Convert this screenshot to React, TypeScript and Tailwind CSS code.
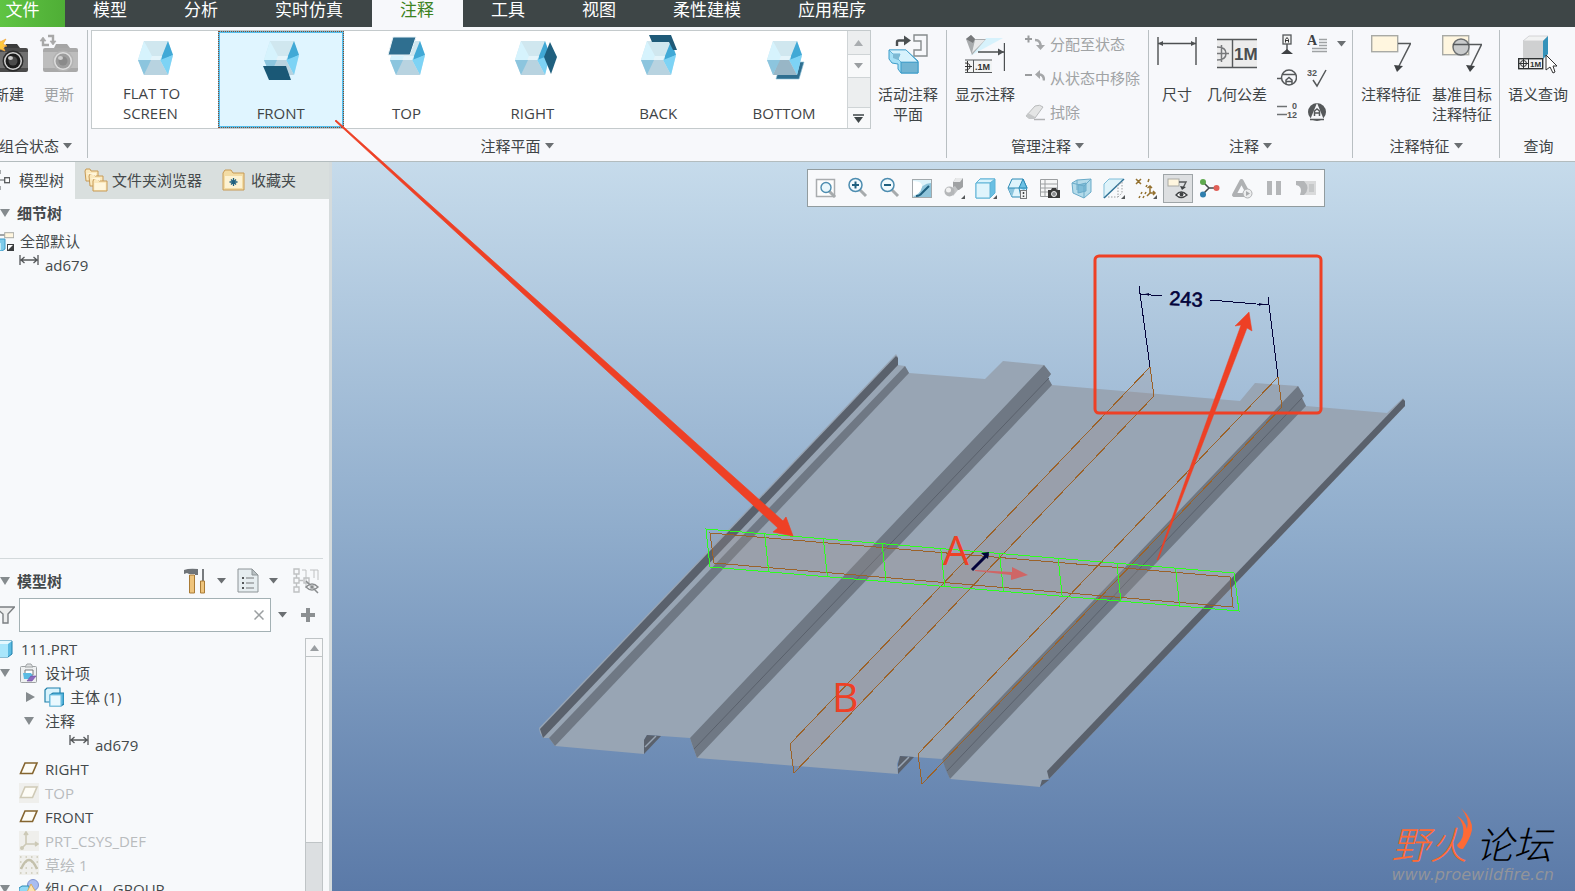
import { useState } from 'react'
import type { ReactNode } from 'react'

const tabs = ['模型', '分析', '实时仿真', '注释', '工具', '视图', '柔性建模', '应用程序']

function Tri({ color = '#6b6f72' }: { color?: string }) {
  return (
    <svg width="9" height="6" viewBox="0 0 9 6" className="shrink-0">
      <path d="M0 0h9L4.500 5.500z" fill={color} />
    </svg>
  )
}

function Expander({ open = true }: { open?: boolean }) {
  return (
    <svg width="10" height="10" viewBox="0 0 10 10" className="shrink-0">
      <path d={open ? 'M0 1h10L5 9z' : 'M1 0l9 5-9 5z'} fill="#858b8e" />
    </svg>
  )
}

/* ---------- ribbon icons ---------- */

function Cube({ view }: { view: string }) {
  return (
    <svg width="50" height="50" viewBox="-8 -8 50 50" className="shrink-0">
      {view === 'BOTTOM' && <path d="M14 21H37L32 38H9z" fill="#2f6f90" stroke="#8fc3da" strokeWidth="0.600" />}
      <path d="M6 0H30L35 14L30 34H6L0 19z" fill="#c9e6f1" />
      <path d="M6 0L0 19H12L16 14z" fill="#d6f3fd" />
      <path d="M6 0H30L24 15H14z" fill="#d0e7ef" />
      <path d="M30 0L35 14L23 20L24 15z" fill="#41a9d6" />
      <path d="M35 14L30 34L22 19z" fill="#7dd3f5" />
      <path d="M6 34H30L22 19H12z" fill={view === 'BOTTOM' ? '#98b6c6' : '#b8d3e0'} />
      <path d="M0 19H13L6 34z" fill="#8cc5de" />
      <path d="M12 19L14 15H24L22 19z" fill="#e4f4fa" />
      {view === 'FRONT' && <path d="M-1 25H22L27 39H5z" fill="#1a5876" />}
      {view === 'TOP' && <path d="M3 -4H26L20 14H-2z" fill="#2f6f90" stroke="#e9f3f7" />}
      {view === 'RIGHT' && <path d="M35 1L42 16 36 33 29 16z" fill="#1f607f" />}
      {view === 'BACK' && <path d="M8 -6H30L36 9H32L28 1H11z" fill="#1f5a78" />}
    </svg>
  )
}

function CameraIcon({ kind }: { kind: 'new' | 'update' }) {
  const dark = kind === 'new'
  return (
    <svg width="40" height="40" viewBox="0 0 40 40">
      <path d="M15 14l2-4h11l3 4z" fill={dark ? '#3b3b3b' : '#a5a5a5'} />
      <rect x="4" y="14" width="35" height="24" rx="2" fill={dark ? '#4a4a4a' : '#a9a9a9'} />
      <rect x="4" y="18" width="35" height="16" fill={dark ? '#707070' : '#bdbdbd'} />
      <circle cx="24" cy="27" r="10.500" fill={dark ? '#2a2a2a' : '#b3b3b3'} />
      <circle cx="24" cy="27" r="9" fill={dark ? '#d2d2d2' : '#dedede'} />
      <circle cx="24" cy="27" r="7.500" fill={dark ? '#1c1c1c' : '#9d9d9d'} />
      <circle cx="24" cy="27" r="4.500" fill={dark ? '#4b4b4b' : '#8a8a8a'} />
      <ellipse cx="21.500" cy="24" rx="2.500" ry="2" fill={dark ? '#c9c9c9' : '#cfcfcf'} />
      {dark ? (
        <path d="M10 3l1 5 6-3-3 5 4 2-4 1 2 4-5-2-2 5-2-6-6 1z" fill="#ffc83c" stroke="#f2a33a" strokeWidth="0.700" />
      ) : (
        <g fill="none" stroke="#a8a8a8" strokeWidth="2.400">
          <path d="M4 5v6h6M9 2h5v6" />
          <path d="M1 7l3-4 3 4zM11 7l3 4 3-4z" fill="#a8a8a8" strokeWidth="0.600" />
        </g>
      )}
    </svg>
  )
}

function ActivePlaneIcon() {
  return (
    <svg width="40" height="40" viewBox="0 0 40 40">
      <path d="M26 1h13v21H26v-6h7V7h-7z" fill="#f7f8fb" stroke="#868b8d" strokeWidth="1.400" />
      <path d="M9 12V8q0-1.500 2-1.500h5" fill="none" stroke="#4b4f51" strokeWidth="2.400" />
      <path d="M16 1.500l7 5-7 5z" fill="#4b4f51" />
      <path d="M1 16h17l12 11v12H13l-3-4v-5l-6-1-3-4z" fill="#a6e0f6" stroke="#3c9cc9" />
      <path d="M13 28h17v11H13z" fill="#72b4d2" stroke="#3c9cc9" />
      <path d="M1 16h17l12 12H13l-3-3 2-5H5z" fill="#d7f2fc" stroke="#3c9cc9" strokeWidth="0.700" />
      <path d="M5 20h7l-2 6-5-2z" fill="#7db9d4" />
    </svg>
  )
}

function ShowAnnotationIcon() {
  return (
    <svg width="40" height="40" viewBox="0 0 40 40">
      <path d="M21 4h17L5 22z" fill="#c9effc" opacity="0.700" />
      <path d="M1 5l5-4 4 4h11L7 21z" fill="#a9acae" />
      <path d="M1 5l5-4 4 4-2 4z" fill="#77797b" />
      <path d="M10 6h10L7 19z" fill="#e8e9ea" />
      <path d="M13 18h26M39.500 9v28" stroke="#4d5052" strokeWidth="1.400" />
      <path d="M33 14.500l6 3.500-6 3.500z" fill="#4d5052" />
      <rect x="0" y="26" width="27" height="12" fill="#f3f4f4" />
      <path d="M0 26h27M0 38.500h27M8.500 26v12" stroke="#55585a" />
      <path d="M0 29q5 0 5 3.500T0 36M0 32.500h7M2.500 27v11" fill="none" stroke="#333" />
      <text x="10" y="36" fontSize="9" fontWeight="bold" fill="#333" className="font-['Liberation_Sans',sans-serif]">.1M</text>
    </svg>
  )
}

function DimensionIcon() {
  return (
    <svg width="40" height="40" viewBox="0 0 40 40">
      <path d="M1 3v28M39 3v28M1 9.500h38" stroke="#4d5052" strokeWidth="1.400" />
      <path d="M1 9.500l5-2.500v5zM39 9.500l-5-2.500v5z" fill="#4d5052" />
    </svg>
  )
}

function GtolIcon() {
  return (
    <svg width="40" height="40" viewBox="0 0 40 40">
      <rect x="0" y="5" width="40" height="29" fill="#ececec" />
      <path d="M0 5.500h40M0 33.500h40M15.500 5v29" stroke="#55585a" strokeWidth="1.400" />
      <path d="M0 13q9 0 9 6.500T0 26M4.500 11v17M0 19.500h12" fill="none" stroke="#77797b" strokeWidth="1.500" />
      <text x="17" y="26" fontSize="17" fontWeight="bold" fill="#4a4d4f" className="font-['Liberation_Sans',sans-serif]">1M</text>
    </svg>
  )
}

function NoteFeatureIcon({ target = false }: { target?: boolean }) {
  return (
    <svg width="40" height="40" viewBox="0 0 40 40">
      <rect x="0.700" y="1.700" width="26" height={target ? 19 : 16} fill="#fff6df" stroke="#a9aaa5" strokeWidth="1.400" />
      {target && <circle cx="19" cy="13" r="8" fill="#c9cbcc" stroke="#6b6e70" strokeWidth="1.500" />}
      <path d={target ? 'M11 10.500h28.500L28 34' : 'M27 9.500h12.500L27 34'} fill="none" stroke="#55585a" strokeWidth="1.500" />
      <path d={target ? 'M24 31l9 1-5 6z' : 'M23 31l9 1-6 6z'} fill="#3f4244" />
    </svg>
  )
}

function QueryIcon() {
  return (
    <svg width="40" height="40" viewBox="0 0 40 40">
      <path d="M5 7l6-5h19l-5 5z" fill="#f1f2f2" stroke="#c5c7c8" strokeWidth="0.700" />
      <path d="M5 7h20v17H5z" fill="#cfd0d1" />
      <path d="M25 7l5-5v18l-5 5z" fill="#3592ba" />
      <rect x="0.700" y="24.700" width="24" height="10" fill="#f2f2f2" stroke="#2f3233" strokeWidth="1.400" />
      <path d="M10.500 24v11M1 29.500h9M5.500 25v9" stroke="#2f3233" />
      <circle cx="5.500" cy="29.500" r="3" fill="none" stroke="#2f3233" />
      <text x="12" y="33" fontSize="8" fontWeight="bold" fill="#2f3233" className="font-['Liberation_Sans',sans-serif]">1M</text>
      <path d="M28 21v15l4-3 3 6 2-1-2-6h4z" fill="#fff" stroke="#333" />
    </svg>
  )
}

function SmallIcon({ name }: { name: string }) {
  return (
    <svg width="20" height="20" viewBox="0 0 20 20" className="shrink-0">
      {name === 'assign' && (
        <g>
          <path d="M0 5h7M3.500 1.500v7" stroke="#9a9c9e" strokeWidth="2" />
          <path d="M10 6q6 0 5.500 7" fill="none" stroke="#a5a7a9" strokeWidth="2.500" />
          <path d="M11 11h9l-4.500 5z" fill="#a5a7a9" />
        </g>
      )}
      {name === 'unassign' && (
        <g>
          <path d="M0 7h7" stroke="#9a9c9e" strokeWidth="2" />
          <path d="M14 6.500q5 0 5 6" fill="none" stroke="#a5a7a9" strokeWidth="2.500" />
          <path d="M10 6.500l5-4.500v9z" fill="#a5a7a9" />
        </g>
      )}
      {name === 'erase' && (
        <g>
          <path d="M1 14l9-10q5-2 8 1l-8 11H4z" fill="#e4e5e5" stroke="#b9bbbc" />
          <path d="M1 14l2-3 7 4-1 2H4z" fill="#c6c8c9" />
          <path d="M9 17.500h11" stroke="#b1b3b4" strokeWidth="1.500" />
        </g>
      )}
      {name === 'datum' && (
        <g>
          <rect x="6" y="1" width="8" height="9" fill="#f3f4f4" stroke="#55585a" strokeWidth="1.300" />
          <path d="M8.500 8.500V5.500l1.500-2 1.500 2v3M8.500 6.500h3" fill="none" stroke="#333" />
          <path d="M10 10v6" stroke="#55585a" strokeWidth="1.500" />
          <path d="M10 15l6 5H4z" fill="#3f4244" />
        </g>
      )}
      {name === 'note' && (
        <g>
          <text x="0" y="11" fontSize="14" fontWeight="bold" className="font-['Liberation_Serif',serif]" fill="#3f4244">A</text>
          <path d="M12 5.500h8M12 8.500h8M12 11.500h8M5 14.500h15M5 17.500h15" stroke="#9fa2a4" strokeWidth="1.500" />
        </g>
      )}
      {name === 'target' && (
        <g fill="none" stroke="#55585a" strokeWidth="1.500">
          <path d="M0 10.500h4" />
          <circle cx="12" cy="9.500" r="7.500" />
          <path d="M5 6.500h14M9 16v-4l3-2.500 3 2.500v4M9 13.500h6" />
        </g>
      )}
      {name === 'finish' && (
        <g>
          <text x="0" y="8" fontSize="9" fontWeight="bold" fill="#55585a" className="font-['Liberation_Sans',sans-serif]">32</text>
          <path d="M6 12l4 6L19 2" fill="none" stroke="#55585a" strokeWidth="1.500" />
        </g>
      )}
      {name === 'ordinate' && (
        <g>
          <path d="M0 4.500h10M0 12.500h10" stroke="#6e7173" strokeWidth="1.400" />
          <text x="15" y="7" fontSize="9" fontWeight="bold" fill="#55585a" className="font-['Liberation_Sans',sans-serif]">0</text>
          <text x="10" y="16" fontSize="9" fontWeight="bold" fill="#55585a" className="font-['Liberation_Sans',sans-serif]">12</text>
        </g>
      )}
      {name === 'symbol' && (
        <g>
          <circle cx="10" cy="10" r="9" fill="#55585a" />
          <path d="M10 1L3 18h14z" fill="#f7f8fb" />
          <path d="M7.500 14V9l2.500-2 2.500 2v5M7 11h6M3 17.500h14" fill="none" stroke="#55585a" strokeWidth="1.500" />
        </g>
      )}
    </svg>
  )
}

/* ---------- ribbon parts ---------- */

function BigButton({ icon, lines, width, disabled }: { icon: ReactNode; lines: string[]; width: string; disabled?: boolean }) {
  return (
    <button disabled={disabled} className={`flex shrink-0 flex-col items-center whitespace-nowrap pt-1 leading-5 disabled:text-[#a0a3a5] ${width}`}>
      {icon}
      <span className="mt-[10px] text-center">
        {lines.map((l) => (
          <span key={l} className="block">{l}</span>
        ))}
      </span>
    </button>
  )
}

function Group({ label, menu = true, className = '', children }: { label: string; menu?: boolean; className?: string; children: ReactNode }) {
  return (
    <section className={`flex shrink-0 flex-col border-r border-[#b9bfc2] ${className}`}>
      <div className="flex h-[106px]">{children}</div>
      {menu ? (
        <button className="flex items-center justify-center gap-1 leading-5">
          {label} <Tri />
        </button>
      ) : (
        <div className="text-center leading-5">{label}</div>
      )}
    </section>
  )
}

function ListButton({ icon, label }: { icon: string; label: string }) {
  return (
    <button disabled className="flex items-center gap-[5px] whitespace-nowrap leading-5 text-[#a0a3a5]">
      <SmallIcon name={icon} />
      {label}
    </button>
  )
}

const planes = ['FLAT TO SCREEN', 'FRONT', 'TOP', 'RIGHT', 'BACK', 'BOTTOM']

function Gallery() {
  const [picked, setPicked] = useState('FRONT')
  return (
    <div className="ml-[3px] flex h-[99px] w-[780px] border border-[#c4cacc] bg-white">
      {planes.map((name) => (
        <button
          key={name}
          onClick={() => setPicked(name)}
          className={`flex flex-1 flex-col items-center justify-start border-2 ${name === picked ? 'border-[#56bdea] bg-[#e0f5ff] outline-1 -outline-offset-1 outline-dotted outline-[#8a4a2a]' : 'border-transparent'}`}
        >
          <Cube view={name} />
          <span className={`flex h-10 items-end justify-center text-left leading-5 ${name.includes(' ') ? 'w-16' : ''}`}>{name}</span>
        </button>
      ))}
      <div className="flex w-[23px] flex-col border-l border-[#cfd4d6] bg-[#eceeef]">
        <button aria-label="上一行" className="flex h-6 items-center justify-center border-b border-[#cfd4d6]">
          <svg width="9" height="6" viewBox="0 0 9 6"><path d="M0 6h9L4.500 0z" fill="#a9adb0" /></svg>
        </button>
        <button aria-label="下一行" className="flex h-[23px] items-center justify-center border-b border-[#cfd4d6] bg-[#f8f9fa]">
          <Tri color="#9a9ea1" />
        </button>
        <button aria-label="更多" className="mt-auto flex h-[21px] items-center justify-center border-t border-[#cfd4d6] bg-[#f8f9fa]">
          <svg width="11" height="9" viewBox="0 0 11 9"><path d="M0 1h11" stroke="#3f4648" strokeWidth="1.500" /><path d="M1 3h9L5.500 9z" fill="#3f4648" /></svg>
        </button>
      </div>
    </div>
  )
}

function Ribbon() {
  return (
    <div className="flex h-[135px] shrink-0 border-b border-[#b3bcbe] bg-[#f7f8fb] py-[3px] text-[#3f4446]">
      <Group label="组合状态" className="-ml-4 w-[104px]">
        <BigButton icon={<CameraIcon kind="new" />} lines={['新建']} width="w-[50px]" />
        <BigButton icon={<CameraIcon kind="update" />} lines={['更新']} width="w-[50px]" disabled />
      </Group>
      <Group label="注释平面" className="w-[859px]">
        <Gallery />
        <BigButton icon={<ActivePlaneIcon />} lines={['活动注释', '平面']} width="w-[74px]" />
      </Group>
      <Group label="管理注释" className="w-[202px]">
        <BigButton icon={<ShowAnnotationIcon />} lines={['显示注释']} width="w-[76px]" />
        <div className="flex flex-col gap-[14px] pl-[2px] pt-1">
          <ListButton icon="assign" label="分配至状态" />
          <ListButton icon="unassign" label="从状态中移除" />
          <ListButton icon="erase" label="拭除" />
        </div>
      </Group>
      <Group label="注释" className="w-[204px]">
        <BigButton icon={<DimensionIcon />} lines={['尺寸']} width="w-[56px]" />
        <BigButton icon={<GtolIcon />} lines={['几何公差']} width="w-[64px]" />
        <div className="grid grid-cols-[20px_20px_9px] items-center gap-x-[10px] gap-y-[14px] self-start pl-2 pt-1">
          <button aria-label="基准特征符号"><SmallIcon name="datum" /></button>
          <button aria-label="注解"><SmallIcon name="note" /></button>
          <button aria-label="注解选项"><Tri /></button>
          <button aria-label="基准目标"><SmallIcon name="target" /></button>
          <button aria-label="表面粗糙度" className="col-span-2"><SmallIcon name="finish" /></button>
          <button aria-label="纵坐标尺寸"><SmallIcon name="ordinate" /></button>
          <button aria-label="符号" className="col-span-2"><SmallIcon name="symbol" /></button>
        </div>
      </Group>
      <Group label="注释特征" className="w-[147px]">
        <BigButton icon={<NoteFeatureIcon />} lines={['注释特征']} width="w-[76px]" />
        <BigButton icon={<NoteFeatureIcon target />} lines={['基准目标', '注释特征']} width="w-[66px]" />
      </Group>
      <Group label="查询" menu={false} className="w-[77px] border-r-0">
        <BigButton icon={<QueryIcon />} lines={['语义查询']} width="w-[76px]" />
      </Group>
    </div>
  )
}

/* ---------- left side ---------- */

function TreeIcon({ name }: { name: string }) {
  return (
    <svg width="20" height="20" viewBox="0 0 20 20" className="shrink-0">
      {name === 'dim' && (
        <g stroke="#55585a" strokeWidth="1.300" fill="none">
          <path d="M1 0v10M19 0v10M2 5h16M5.500 2L2 5l3.500 3M14.500 2L18 5l-3.500 3" />
        </g>
      )}
      {name === 'state' && (
        <g>
          <path d="M0 4h12" stroke="#85898b" strokeWidth="1.500" />
          <rect x="10.700" y="1.700" width="9" height="5" fill="#fff6df" stroke="#a9aaa5" />
          <path d="M0 9l3-1h8v10l-3 2H0z" fill="#7fcbea" stroke="#3c9cc9" />
          <path d="M0 12h7v7H0z" fill="#c2ecfb" />
          <rect x="13" y="13" width="7" height="7" fill="#3a3d3f" />
          <path d="M14 14h5l-5 5z" fill="#fff" />
        </g>
      )}
      {name === 'part' && (
        <g>
          <path d="M0 5l4-3h13v13l-4 3H0z" fill="#5bbbe2" stroke="#1f80ab" />
          <path d="M0 5h13v13H0z" fill="#a9e6fb" />
          <path d="M0 5l4-3h13l-4 3z" fill="#e4f8fe" />
        </g>
      )}
      {name === 'design' && (
        <g>
          <rect x="1.500" y="3.500" width="16" height="16" rx="1" fill="#eef0f1" stroke="#9da1a3" />
          <path d="M6 4l2-3h4l2 3z" fill="#dfe1e2" stroke="#9da1a3" />
          <path d="M6 7h8v5H6z" fill="#fff" stroke="#77797b" />
          <path d="M4 10h8l2 3-3 3H5z" fill="#5bbbe2" />
          <path d="M8 18l4-5h5l-4 5z" fill="#8d6bbd" stroke="#6b4aa0" strokeWidth="0.600" />
        </g>
      )}
      {name === 'body' && (
        <g stroke="#1f80ab" strokeWidth="1.200">
          <path d="M1 3l2-2h13v12l-2 2H1z" fill="#d9f3fc" />
          <path d="M6 8l3-2h11v11l-3 2H6z" fill="#4fb0da" />
          <path d="M6 8h11v11H6z" fill="#e9f8fe" stroke="#7cc6e4" />
        </g>
      )}
      {(name === 'plane' || name === 'planeOff') && (
        <g>
          {name === 'planeOff' && <rect width="20" height="20" fill="#efefec" />}
          <path d="M6 4h12l-4.500 10.500h-12z" fill="#fdfcf6" stroke={name === 'plane' ? '#85652f' : '#cfcab6'} strokeWidth="1.600" />
        </g>
      )}
      {name === 'csys' && (
        <g>
          <rect width="20" height="20" fill="#efefec" />
          <path d="M7 2v11L2 18M7 13h12M5 4l2-3 2 3M16 11l3 2-3 2" fill="none" stroke="#ccc9b6" strokeWidth="1.600" />
          <circle cx="3" cy="17" r="2" fill="#ccc9b6" />
        </g>
      )}
      {name === 'sketch' && (
        <g>
          <rect width="20" height="20" fill="#efefec" />
          <path d="M1 2h18M1 7h18M1 13h18M1 18h18" stroke="#ccc9b6" strokeWidth="1.500" strokeDasharray="1.500 4" />
          <path d="M2 14q8-18 16 0" fill="none" stroke="#c4c1ac" strokeWidth="2.500" />
        </g>
      )}
      {name === 'group' && (
        <g>
          <circle cx="14" cy="6" r="5.500" fill="#a9bdf0" stroke="#7f93cf" />
          <path d="M0 9l3-2h7v12H0z" fill="#8fd8f5" stroke="#2c8ab5" />
          <path d="M12 5l6 10q-5 4-11 0z" fill="#fbe2ae" stroke="#d9ae63" />
        </g>
      )}
    </svg>
  )
}

type Row = { icon?: string; label: string; indent: string; open?: boolean; off?: boolean }

const rows: Row[] = [
  { icon: 'part', label: '111.PRT', indent: '-ml-[5px]' },
  { icon: 'design', label: '设计项', indent: '', open: true },
  { icon: 'body', label: '主体 (1)', indent: 'ml-[25px]', open: false },
  { label: '注释', indent: 'ml-[24px]', open: true },
  { icon: 'dim', label: 'ad679', indent: 'ml-[69px]' },
  { icon: 'plane', label: 'RIGHT', indent: 'ml-[19px]' },
  { icon: 'planeOff', label: 'TOP', indent: 'ml-[19px]', off: true },
  { icon: 'plane', label: 'FRONT', indent: 'ml-[19px]' },
  { icon: 'csys', label: 'PRT_CSYS_DEF', indent: 'ml-[19px]', off: true },
  { icon: 'sketch', label: '草绘 1', indent: 'ml-[19px]', off: true },
  { icon: 'group', label: '组LOCAL_GROUP', indent: '', open: true },
]

function TreeRow({ row }: { row: Row }) {
  return (
    <li className={`flex h-6 items-center whitespace-nowrap ${row.indent} ${row.off ? 'text-[#b9bcbe]' : ''}`}>
      {row.open !== undefined && (
        <button aria-label={row.open ? '折叠' : '展开'} className={row.icon ? 'mr-[9px]' : 'mr-[11px]'}>
          <Expander open={row.open} />
        </button>
      )}
      {row.icon && <TreeIcon name={row.icon} />}
      <span className={row.icon ? 'ml-[6px]' : ''}>{row.label}</span>
    </li>
  )
}

function FolderIcon({ many = false }: { many?: boolean }) {
  return (
    <svg width="24" height="24" viewBox="0 0 24 24">
      {many ? (
        <g fill="#fbe9be" stroke="#c79a55">
          <path d="M1 3l1-2h4l1 2h7v10H2z" />
          <path d="M5 8l1-2h4l1 2h8v10H6z" />
          <path d="M9 13l1-2h4l1 2h8v10H9z" />
          <path d="M10.500 15h11v7h-11zM6 10h10v3M2 5h10v3" fill="#fff6dc" stroke="none" />
        </g>
      ) : (
        <g>
          <path d="M2 5l2-3h6l2 3h11v17H2z" fill="#f3dca4" stroke="#c79a55" />
          <path d="M4 8h17v12H4z" fill="#fdf2d2" />
          <path d="M12.500 10v8M8.500 14h8M10 11.500l5 5M15 11.500l-5 5" stroke="#1f607f" strokeWidth="1.300" />
        </g>
      )}
    </svg>
  )
}

function Sidebar() {
  const [filter, setFilter] = useState('')
  return (
    <aside className="flex w-[332px] shrink-0 flex-col border-r-[3px] border-[#d5dbdc] bg-[#f7f9fb] text-[#44494b]">
      <div role="tablist" className="flex h-[37px] shrink-0 bg-[#d9dfde]">
        <button role="tab" aria-selected className="flex w-[75px] items-center gap-[9px] bg-[#f7f9fb] pb-[2px]">
          <svg width="10" height="22" viewBox="0 0 10 22">
            <path d="M0 1v4M0 17v4M0 11h5" stroke="#8c9093" strokeWidth="1.500" />
            <rect x="4.700" y="8.700" width="5" height="5" fill="#fff" stroke="#55585a" strokeWidth="1.300" />
          </svg>
          模型树
        </button>
        <button role="tab" className="ml-[9px] flex items-center gap-1 pb-[2px]"><FolderIcon many />文件夹浏览器</button>
        <button role="tab" className="ml-[19px] flex items-center gap-[6px] pb-[2px]"><FolderIcon />收藏夹</button>
      </div>

      <div className="mr-[6px] h-[360px] shrink-0 border-b border-[#d3d9db] pt-[3px]">
        <h2 className="flex h-[22px] items-center gap-[7px] font-bold"><Expander /> 细节树</h2>
        <ul className="pt-[5px]">
          <li className="-ml-[6px] flex h-6 items-center gap-[6px]"><TreeIcon name="state" /> 全部默认</li>
          <li className="ml-[19px] flex h-6 items-center gap-[6px]"><TreeIcon name="dim" /> ad679</li>
        </ul>
      </div>

      <div className="flex h-[37px] shrink-0 items-center pt-[6px]">
        <h2 className="flex flex-1 items-center gap-[7px] font-bold"><Expander /> 模型树</h2>
        <button aria-label="设置">
          <svg width="24" height="26" viewBox="0 0 24 26">
            <path d="M5.500 7h5v18h-5z" fill="#eec47c" stroke="#a97b35" />
            <path d="M0 2q5-2 14-1v6h-3V6H5L3 5 0 6z" fill="#6f7478" />
            <path d="M18 1h2v13h-2z" fill="#777b7e" />
            <path d="M16.500 13h4v12h-4z" fill="#eec47c" stroke="#a97b35" />
          </svg>
        </button>
        <button aria-label="设置选项" className="ml-[9px]"><Tri /></button>
        <button aria-label="显示" className="ml-[11px]">
          <svg width="22" height="26" viewBox="0 0 22 26">
            <path d="M1 1h14l6 6v17H1z" fill="#e6edf0" stroke="#8d9497" />
            <path d="M15 1v6h6z" fill="#b9c1c4" stroke="#8d9497" />
            <path d="M9 10h8M9 15h8M9 20h8" stroke="#77797b" />
            <path d="M5 10h2M5 15h2M5 20h2" stroke="#55585a" strokeWidth="2" />
          </svg>
        </button>
        <button aria-label="显示选项" className="ml-[10px]"><Tri /></button>
        <button aria-label="隐藏项" className="ml-[15px] mr-[10px]">
          <svg width="26" height="26" viewBox="0 0 26 26" fill="none" stroke="#bfc1c2">
            <path d="M1 1h5v5H1zM1 10h5v5H1zM1 19h5v5H1zM3.500 6v4M3.500 15v4M6 12.500h4" strokeWidth="1.400" />
            <path d="M9 2h4v18M17 2h4v8M21 2h4v10" />
            <path d="M11 10h5v5h-5z" strokeWidth="1.400" />
            <path d="M13 19q6-6 12 0-6 6-12 0zM13 13l12 12" stroke="#8a8d8f" strokeWidth="1.500" />
            <circle cx="19" cy="19" r="2" fill="#8a8d8f" />
          </svg>
        </button>
      </div>

      <div className="flex h-[38px] shrink-0 items-center">
        <svg width="15" height="20" viewBox="0 0 15 20" className="mr-1 shrink-0">
          <path d="M-4 2h18.500L8 9v9H3V9l-7-6" fill="#eceded" stroke="#7b7f82" strokeWidth="1.400" />
        </svg>
        <div className="flex h-[34px] w-[252px] items-center border border-[#a3b1b4] bg-white pr-[6px]">
          <input aria-label="过滤模型树" value={filter} onChange={(e) => setFilter(e.target.value)} className="h-full min-w-0 flex-1 px-2 outline-none" />
          <button aria-label="清除" onClick={() => setFilter('')}>
            <svg width="10" height="10" viewBox="0 0 10 10"><path d="M0.500 0.500l9 9M9.500 0.500l-9 9" stroke="#9b9fa1" strokeWidth="1.500" /></svg>
          </button>
        </div>
        <button aria-label="过滤选项" className="ml-[7px]"><Tri /></button>
        <button aria-label="添加" className="ml-[14px]">
          <svg width="14" height="14" viewBox="0 0 14 14"><path d="M7 0v14M0 7h14" stroke="#8c9092" strokeWidth="4" /></svg>
        </button>
      </div>

      <div className="mt-[3px] flex min-h-0 flex-1 pr-[6px]">
        <ul className="min-w-0 flex-1 overflow-hidden">
          {rows.map((r) => (
            <TreeRow key={r.label + r.indent} row={r} />
          ))}
        </ul>
        <div className="mt-px flex w-[18px] flex-col border-x border-[#bfc4c6] bg-[#dcdfe1]">
          <div className="flex h-[19px] items-center justify-center border-y border-[#bfc4c6] bg-[#f7f8f9]">
            <svg width="9" height="6" viewBox="0 0 9 6"><path d="M0 6h9L4.500 0z" fill="#9a9ea1" /></svg>
          </div>
          <div className="h-[186px] border-b border-[#bfc4c6] bg-[#f7f8f9]" />
        </div>
      </div>
    </aside>
  )
}

/* ---------- graphics window ---------- */

const viewTools = ['refit', 'zoomIn', 'zoomOut', 'repaint', 'render', 'style', 'saved', 'manager', 'perspective', 'section', 'datums', 'annotations', 'spin', 'simulate', 'pause', 'resume']

function Corner() {
  return <path d="M22 18v4h-4z" fill="#55585a" stroke="none" />
}

function Lens() {
  return (
    <g>
      <path d="M13 13l6 6" stroke="#a7abad" strokeWidth="3" />
      <circle cx="8.500" cy="8" r="6.500" fill="#f2fafd" stroke="#4d8db0" strokeWidth="1.500" />
    </g>
  )
}

function ViewIcon({ name }: { name: string }) {
  return (
    <svg width="22" height="22" viewBox="0 0 22 22">
      {name === 'refit' && (
        <g>
          <rect x="1.500" y="2.500" width="18" height="17" fill="#fdfdfd" stroke="#a9acae" strokeWidth="1.500" />
          <path d="M14 14l6 6" stroke="#a7abad" strokeWidth="3" />
          <circle cx="11" cy="10.500" r="5" fill="#eaf7fc" stroke="#4d8db0" strokeWidth="1.400" />
        </g>
      )}
      {name === 'zoomIn' && <g><Lens /><path d="M5 8h7M8.500 4.500v7" stroke="#1f607f" strokeWidth="2" /></g>}
      {name === 'zoomOut' && <g><Lens /><path d="M5 8h7" stroke="#1f607f" strokeWidth="2" /></g>}
      {name === 'repaint' && (
        <g>
          <rect x="1.500" y="2.500" width="19" height="18" fill="#8fc4da" stroke="#a3a9ac" />
          <path d="M2 3h18v3Q11 6 7 17l-5 3z" fill="#dff3fa" />
          <path d="M2 4q10 0 9 6-2 8-9 8z" fill="#fff" />
          <path d="M5 19q4 0 6-3l7-7" fill="none" stroke="#1f607f" strokeWidth="2" />
        </g>
      )}
      {name === 'render' && (
        <g>
          <path d="M10 5l3-4h7v9l-4 3h-6z" fill="#9fa1a3" />
          <path d="M10 5l3-4h7l-3 4z" fill="#e8e9ea" />
          <path d="M7 12l5-3 3 4-5 6z" fill="#c2c4c6" />
          <circle cx="6.500" cy="14.500" r="5" fill="#b5b7b9" />
          <circle cx="5.500" cy="13" r="2.500" fill="#f2f2f2" />
          <Corner />
        </g>
      )}
      {name === 'style' && (
        <g stroke="#5fb3d6">
          <path d="M1 6l4-4h15v14l-5 5H1z" fill="#69bfe3" />
          <path d="M1 6l4-4h15l-5 4z" fill="#d9f3fc" />
          <path d="M1 6h14v15H1z" fill="#dff4fc" />
          <Corner />
        </g>
      )}
      {name === 'saved' && (
        <g>
          <path d="M5 2h11l4 9-3 9H5l-4-9z" fill="#dff4fc" stroke="#2c8ab5" />
          <path d="M5 20l3-9H1z" fill="#8cc5de" />
          <path d="M12 11l4-9 4 9-3 2z" fill="#6dc1e4" />
          <path d="M1 11h11l4-9 4 9h-8l2 9" fill="none" stroke="#2c8ab5" />
          <rect x="13.500" y="13.500" width="6" height="8" fill="#f3f4f4" stroke="#77797b" />
          <path d="M16.500 15v2M16.500 18.500v1.500" stroke="#3f4244" strokeWidth="1.500" />
        </g>
      )}
      {name === 'manager' && (
        <g>
          <path d="M1.500 2.500h17v17h-17zM1 7h18M1 11h18M1 15h18M6 2v17" fill="#f6f7f7" stroke="#9c9fa1" />
          <path d="M9 13h3l1-2h4l1 2h3v8H9z" fill="#3b3b3b" />
          <circle cx="15" cy="17" r="2.500" fill="#8b8d8f" stroke="#eee" />
        </g>
      )}
      {name === 'perspective' && (
        <g stroke="#6aabc9">
          <path d="M1 6l5-3 14-1v13l-7 6-11-5z" fill="#b4dbea" />
          <path d="M7 8l8-2v8l-8 2z" fill="#7fbdd8" />
          <path d="M1 6l12 3v12M13 9l7-7M6 3v10" fill="none" />
        </g>
      )}
      {name === 'section' && (
        <g>
          <path d="M1 7l5-5h14L2 20z" fill="#dff3fa" />
          <path d="M1 7l5-5h14M1 7v14" fill="none" stroke="#7fbdd8" />
          <path d="M1 21L21 2" stroke="#2f7296" strokeWidth="1.500" />
          <path d="M5 20h10V8l4-3v11l-4 4" fill="none" stroke="#9c9fa1" strokeDasharray="1.500 1.500" />
          <Corner />
        </g>
      )}
      {name === 'datums' && (
        <g stroke="#94712f" strokeWidth="1.500">
          <path d="M1 2l5 5M6 2L1 7M14 2l-1 3M12 8l-1 2M7 15l-1 2M5 19l-1 2M11 15l-1 2M9 19l-1 2M15 9v7h5M15 16l-3 3M12.500 11l2.500-2 2 2M18 14l2 2-2 2" fill="none" />
          <Corner />
        </g>
      )}
      {name === 'annotations' && (
        <g>
          <rect x="1" y="2" width="11" height="7" fill="#fff6df" stroke="#a9aaa5" />
          <path d="M12 5h7l-3 6" fill="none" stroke="#55585a" strokeWidth="1.400" />
          <path d="M13 9l6 1-4 3z" fill="#3f4244" />
          <path d="M9 18q5-6 11 0-6 5-11 0z" fill="#fff" stroke="#3f4244" strokeWidth="1.300" />
          <circle cx="14.500" cy="17.500" r="2" fill="#3f4244" />
        </g>
      )}
      {name === 'spin' && (
        <g>
          <path d="M4 5l6 6-6 6M10 11h8" fill="none" stroke="#44494b" strokeWidth="1.500" />
          <circle cx="4" cy="5" r="3" fill="#5faa4f" />
          <circle cx="4" cy="17.500" r="3" fill="#2f7fae" />
          <circle cx="17.500" cy="11" r="3" fill="#e06058" />
        </g>
      )}
      {name === 'simulate' && (
        <g>
          <path d="M10.500 4L3 18h15z" fill="none" stroke="#afb1b3" strokeWidth="4" strokeLinejoin="round" />
          <circle cx="16.500" cy="16.500" r="4.500" fill="#ecedee" stroke="#afb1b3" />
          <path d="M15 14l4 2.500-4 2.500z" fill="#a9abad" />
        </g>
      )}
      {name === 'pause' && <path d="M4 4h5v14H4zM13 4h5v14h-5z" fill="#b4b6b8" />}
      {name === 'resume' && (
        <g>
          <rect x="1" y="4" width="20" height="14" fill="#d9dadb" />
          <path d="M1 4h8q7 7 0 14H3q7-6-2-8z" fill="#b4b6b8" />
          <path d="M1 8q7 1 4 10H1z" fill="#f8f9fb" />
          <rect x="14" y="7" width="5" height="8" fill="#c6c8c9" />
        </g>
      )}
    </svg>
  )
}

function ViewToolbar() {
  return (
    <div className="absolute left-[475px] top-[7px] flex h-[38px] items-center border border-[#929c9f] bg-[#f8f9fb] px-[2px]">
      {viewTools.map((t) => (
        <button key={t} aria-label={t} className="flex w-8 items-center justify-center">
          <span className={`flex h-[29px] w-[30px] items-center justify-center ${t === 'annotations' ? 'border border-[#9fa5a8] bg-[#dddfe1]' : ''}`}>
            <ViewIcon name={t} />
          </span>
        </button>
      ))}
    </div>
  )
}

const light = '#98a5b4'
const mid = '#6f7884'
const dark = '#5a616c'

function Model() {
  const cells = [1, 2, 3, 4, 5, 6, 7, 8]
  return (
    <svg viewBox="332 162 1243 729" preserveAspectRatio="xMinYMin slice" className="absolute inset-0 h-full w-full">
      {/* sheet */}
      <path
        d="M896 354L898 357V365L905 366L909 373L985 379L1003 361L1044 365L1051 374L1048 378L1052 385L1240 401L1255 383L1298 386L1304 396L1302 398L1306 406L1387 413L1403 398L1405 401V406L1049 779L1042 780L1040 787L950 779L947 771L942 759L900 756L897 764L898 774L697 758L693 747L690 738L647 735L644 740V754L555 746L549 738H543L540 733L539 728z"
        fill={light}
      />
      <path d="M896 356L898 358V365L543 738L540 729z" fill={dark} />
      <path d="M905 366L909 373L555 746L549 738z" fill={mid} />
      <path d="M1044 365L1051 374L1048 378L1052 385L697 758L693 747L690 738z" fill={mid} />
      <path d="M1049 378L694 749" stroke={dark} strokeWidth="1" />
      <path d="M1298 386L1304 396L1302 398L1306 406L950 779L946 770L942 759z" fill={mid} />
      <path d="M1302 398L947 771" stroke={dark} strokeWidth="1" />
      <path d="M1403 399L1405 401V406L1049 779L1047 771z" fill={dark} />
      <path d="M1042 780H1049L1040 787z" fill={dark} />

      {/* underside seen through the rib ends */}
      <path d="M647 735L661 736L644 754V740z" fill={dark} />
      <path d="M656 736L645 747" stroke={light} strokeWidth="1.500" />
      <path d="M900 756L914 757L898 774V764z" fill={dark} />
      <path d="M909 757L898 768" stroke={light} strokeWidth="1.500" />

      {/* datum planes */}
      <path d="M1150 367L1154 396L794 773L790 744z" fill="#9c908e" opacity="0.250" />
      <path d="M710 533L1230 577L1233 606L714 563z" fill="#a0928e" opacity="0.250" />
      <g fill="none" stroke="#9b6229" strokeWidth="1" shapeRendering="crispEdges">
        <path d="M1150 367L1154 396L794 773L790 744z" />
        <path d="M1278 377L1282 407L922 784L918 754z" />
        <path d="M710 533L1230 577L1233 607L714 563z" />
      </g>
      <g fill="none" stroke="#2dff1e" strokeWidth="1" shapeRendering="crispEdges">
        <path d="M706 529L1234 573L1239 611L710 567z" />
        {cells.map((n) => (
          <path key={n} d={`M${706 + n * 58.7} ${529 + n * 4.9}L${710 + n * 58.7} ${567 + n * 4.9}`} />
        ))}
      </g>

      {/* axes */}
      <path d="M975 570L1012 572V567L1028 575L1011 580V575L975 571z" fill="#cf6666" />
      <path d="M972 570L988 554" stroke="#03033a" strokeWidth="3" />
      <path d="M981 553L989 552L988 559z" fill="#03033a" />

      {/* driven dimension */}
      <g stroke="#03033a" strokeWidth="1" shapeRendering="crispEdges">
        <path d="M1139 286L1150 367M1268 297L1278 377M1140 294L1162 296M1210 300L1268 305" />
      </g>
      <path d="M1145 294L1149 293V296zM1263 304L1259 303V306z" fill="#03033a" />
      <text x="1169" y="305" fontSize="20" fill="#03033a" stroke="#03033a" strokeWidth="0.600" transform="rotate(3 1169 305)" className="font-['Liberation_Sans',sans-serif]">243</text>
    </svg>
  )
}

function Watermark() {
  return (
    <div className="absolute bottom-[6px] right-[21px] italic">
      <div className="relative flex font-['Noto_Sans_CJK_SC',sans-serif] text-[38px] font-light leading-[44px]">
        <span className="text-[#ff6a35]">野火</span>
        <span className="ml-[8px] text-black">论坛</span>
        <svg width="20" height="44" viewBox="0 0 20 44" className="absolute -top-[14px] left-[65px]">
          <path d="M5 1Q17 12 16 23Q14 32 7 42Q2 42 1 38Q9 31 7 20Q6 14 1 9Q9 13 11 22Q14 12 5 1z" fill="#ff6a35" />
        </svg>
      </div>
      <a href="#" className="block font-['DejaVu_Sans',sans-serif] text-[16px] leading-5 text-[#92949a]">www.proewildfire.cn</a>
    </div>
  )
}

function Markup() {
  return (
    <svg viewBox="0 0 1575 891" preserveAspectRatio="xMinYMin slice" className="pointer-events-none absolute inset-0 h-full w-full" fill="#ee4025">
      <path d="M336 120L783 521L786 517L793 536L773 532L778 528L335 121z" stroke="#ee4025" strokeWidth="0.700" />
      <path d="M1157 560L1241 325L1235 326L1249 312L1252 331L1247 328L1158 560z" stroke="#ee4025" strokeWidth="0.500" />
      <rect x="1095" y="256" width="226" height="157" rx="4" fill="none" stroke="#ee4025" strokeWidth="3" />
      <g fontSize="41" fontWeight="500">
        <text x="943" y="565">A</text>
        <text x="832" y="712">B</text>
      </g>
    </svg>
  )
}

export default function App() {
  const [active, setActive] = useState('注释')

  return (
    <div className="relative flex h-screen flex-col overflow-hidden bg-[#f7f8fb] font-['Open_Sans','Noto_Sans_CJK_SC',sans-serif] text-[15px] leading-5">
      <nav className="flex h-[27px] shrink-0 bg-[#3e4647] text-[17px] leading-5 text-white">
        <button className="w-[65px] bg-linear-to-r from-[#5fc443] to-[#4fae36] pb-[7px] pr-5 text-center">文件</button>
        {tabs.map((t) => (
          <button key={t} onClick={() => setActive(t)} className={`pb-[7px] pl-7 pr-[29px] ${t === active ? 'bg-[#f7f8fb] text-[#3c8222]' : ''}`}>
            {t}
          </button>
        ))}
      </nav>
      <Ribbon />
      <div className="flex min-h-0 flex-1">
        <Sidebar />
        <main className="relative min-w-0 flex-1 overflow-hidden bg-linear-to-b from-[#c6dbeb] via-[#90adcc] to-[#5b7aa8]">
          <Model />
          <ViewToolbar />
          <Watermark />
        </main>
      </div>
      <Markup />
    </div>
  )
}
